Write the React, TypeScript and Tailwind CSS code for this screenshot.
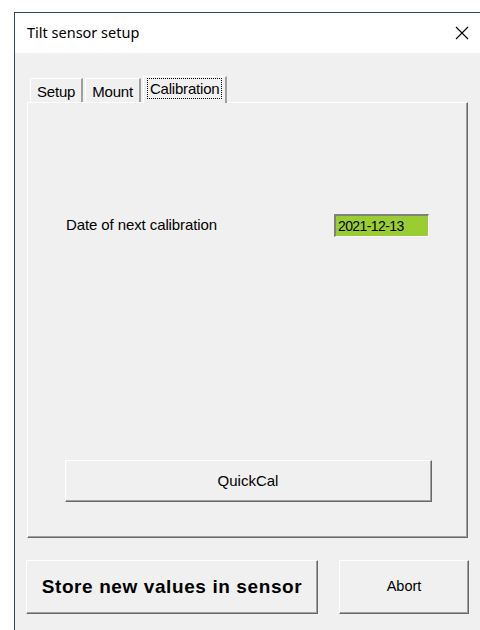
import React from "react";

const sans = "font-['Liberation_Sans',Arial,sans-serif]";

// Classic raised 3D edge used by buttons and the tab page
const raised =
  "border-t border-l border-t-white border-l-white border-r border-b border-r-[#696969] border-b-[#696969] shadow-[inset_-1px_-1px_0_#a0a0a0]";

const Tab: React.FC<{ label: string; active?: boolean }> = ({ label, active }) => (
  <div
    className={`relative flex items-center justify-center ${
      active
        ? "h-[27px] px-[6px] z-10 bg-[#f0f0f0] -mb-px"
        : "h-[24px] px-[6px] bg-[#f0f0f0]"
    } border-t border-l border-white border-r-2 border-r-[#a0a0a0]`}
  >
    <span
      className={`text-[15px] leading-none text-black tracking-[-0.2px] ${
        active ? "outline outline-1 outline-dotted outline-black outline-offset-[2px] -mt-[4px]" : "mt-[2px]"
      }`}
    >
      {label}
    </span>
  </div>
);

export default function App() {
  return (
    <div className={`w-[480px] h-[630px] bg-white pt-[12px] pl-[14px] overflow-hidden ${sans}`}>
      <div className="h-[640px] border-l border-t border-[#2e4b5e] flex flex-col">
        {/* title bar */}
        <div className="h-[40px] bg-white flex items-center justify-between pl-[12px] pr-[11px]">
          <span className="text-[14.5px] text-black font-['Noto_Sans','Open_Sans',sans-serif]">
            Tilt sensor setup
          </span>
          <svg width="14" height="14" viewBox="0 0 14 14">
            <path d="M1 1 L13 13 M13 1 L1 13" stroke="#000" strokeWidth="1.1" />
          </svg>
        </div>

        {/* client area */}
        <div className="flex-1 bg-[#f0f0f0] pl-[12px] pt-[23px]">
          <div className="flex items-end pl-[3px] gap-[2px]">
            <Tab label="Setup" />
            <Tab label="Mount" />
            <Tab label="Calibration" active />
          </div>

          <div className={`w-[441px] h-[436px] ${raised} flex flex-col`}>
            <div className="flex items-center justify-between mt-[111px] pl-[38px] pr-[38px]">
              <span className="text-[15px] text-black tracking-[-0.1px]">Date of next calibration</span>
              <div className="w-[95px] h-[23px] bg-[#9acd32] border-t-2 border-l-2 border-t-[#808080] border-l-[#808080] border-r border-b border-r-white border-b-white flex items-center pl-[2px]">
                <span className="text-[14px] text-black tracking-[-0.6px]">2021-12-13</span>
              </div>
            </div>

            <div className="mt-auto mb-[35px] flex justify-center pl-[1px]">
              <button
                type="button"
                className={`w-[367px] h-[42px] bg-[#f0f0f0] ${raised} text-[15px] text-black`}
              >
                QuickCal
              </button>
            </div>
          </div>

          <div className="flex mt-[22px] -ml-[1px] gap-[21px]">
            <button
              type="button"
              className={`w-[292px] h-[54px] bg-[#f0f0f0] ${raised} text-[19px] font-bold text-black tracking-[0.6px]`}
            >
              Store new values in sensor
            </button>
            <button
              type="button"
              className={`w-[130px] h-[54px] bg-[#f0f0f0] ${raised} text-[14.5px] text-black`}
            >
              Abort
            </button>
          </div>
        </div>
      </div>
    </div>
  );
}
